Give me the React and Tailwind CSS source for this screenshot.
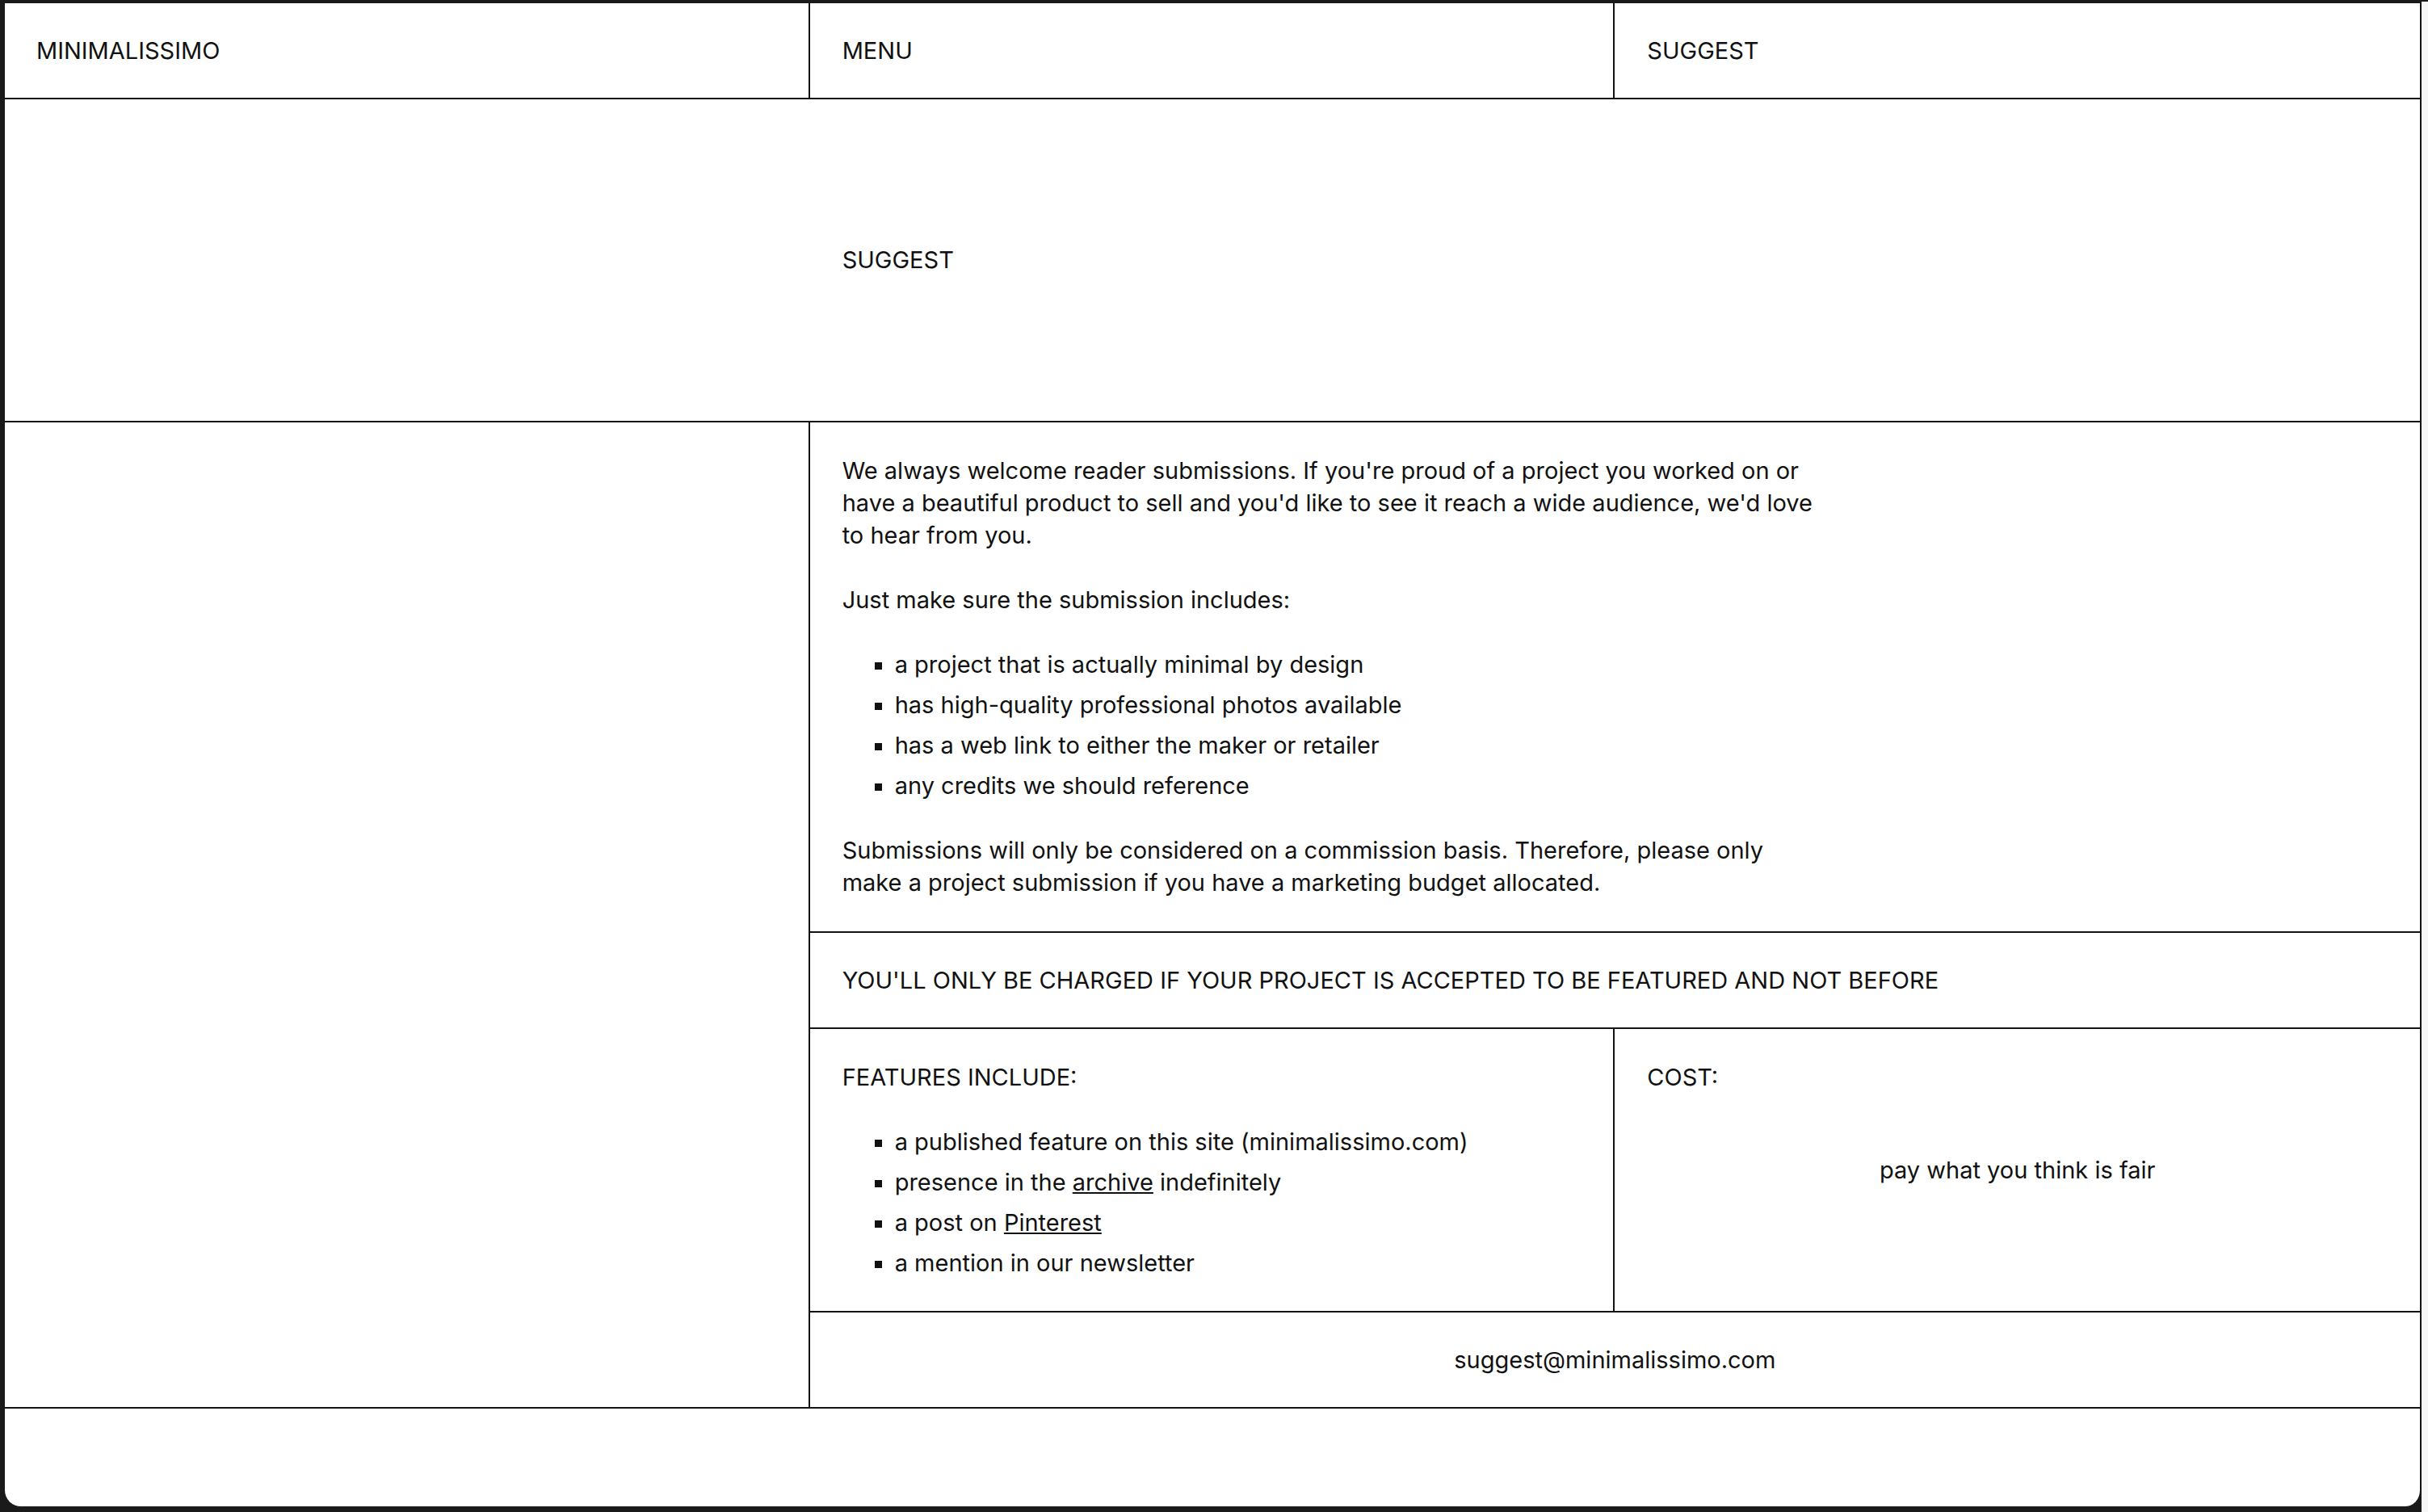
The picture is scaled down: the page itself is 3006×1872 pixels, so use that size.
import React from 'react';

const line = 'border-[#141414]';

function Bullets({ items }) {
  return (
    <ul className="list-[square] pl-[65px] marker:text-[#111]">
      {items.map((item, i) => (
        <li key={i} className={i > 0 ? 'mt-[10px]' : ''}>
          {item}
        </li>
      ))}
    </ul>
  );
}

export default function App() {
  return (
    <div className="flex h-[1872px] w-[3006px] overflow-hidden bg-[#1a1a1a] font-[Inter,sans-serif] text-[29px] leading-[40px] text-[#111]">
      <div className={`ml-[6px] mt-[4px] mb-[7px] flex flex-1 flex-col overflow-hidden rounded-b-[20px] border-r-2 bg-white ${line}`}>
        {/* top bar */}
        <div className={`grid h-[119px] grid-cols-3 border-b-2 ${line}`}>
          <div className={`flex items-center border-r-2 px-[39px] ${line}`}>MINIMALISSIMO</div>
          <div className={`flex items-center border-r-2 px-[40px] ${line}`}>MENU</div>
          <div className="flex items-center px-[40px]">SUGGEST</div>
        </div>

        {/* page title */}
        <div className={`grid h-[400px] grid-cols-3 border-b-2 ${line}`}>
          <div />
          <div className="flex items-center px-[40px]">SUGGEST</div>
          <div />
        </div>

        {/* body */}
        <div className={`grid grid-cols-3 border-b-2 ${line}`}>
          <div className={`border-r-2 ${line}`} />
          <div className="col-span-2 flex flex-col">
            <div className={`border-b-2 px-[40px] py-[40px] ${line}`}>
              <div className="max-w-[1215px]">
                <p>
                  We always welcome reader submissions. If you're proud of a project you worked on or have a
                  beautiful product to sell and you'd like to see it reach a wide audience, we'd love to hear
                  from you.
                </p>
                <p className="mt-[40px]">Just make sure the submission includes:</p>
                <div className="mt-[40px]">
                  <Bullets
                    items={[
                      'a project that is actually minimal by design',
                      'has high-quality professional photos available',
                      'has a web link to either the maker or retailer',
                      'any credits we should reference',
                    ]}
                  />
                </div>
                <p className="mt-[40px]">
                  Submissions will only be considered on a commission basis. Therefore, please only make a
                  project submission if you have a marketing budget allocated.
                </p>
              </div>
            </div>

            <div className={`flex h-[119px] items-center border-b-2 px-[40px] ${line}`}>
              YOU'LL ONLY BE CHARGED IF YOUR PROJECT IS ACCEPTED TO BE FEATURED AND NOT BEFORE
            </div>

            <div className={`grid grid-cols-2 border-b-2 ${line}`}>
              <div className={`border-r-2 px-[40px] pt-[40px] pb-[39px] ${line}`}>
                <p>FEATURES INCLUDE:</p>
                <div className="mt-[40px]">
                  <Bullets
                    items={[
                      'a published feature on this site (minimalissimo.com)',
                      <>
                        presence in the <a className="underline">archive</a> indefinitely
                      </>,
                      <>
                        a post on <a className="underline">Pinterest</a>
                      </>,
                      'a mention in our newsletter',
                    ]}
                  />
                </div>
              </div>
              <div className="flex flex-col px-[40px] pt-[40px] pb-[39px]">
                <p>COST:</p>
                <div className="flex flex-1 items-center justify-center">pay what you think is fair</div>
                <div className="h-[40px]" />
              </div>
            </div>

            <div className="flex h-[117px] items-center justify-center">suggest@minimalissimo.com</div>
          </div>
        </div>

        {/* footer */}
        <div className="flex-1" />
      </div>
      <div className="mt-[2px] w-[8px] bg-[#f6f6f6]" />
    </div>
  );
}
